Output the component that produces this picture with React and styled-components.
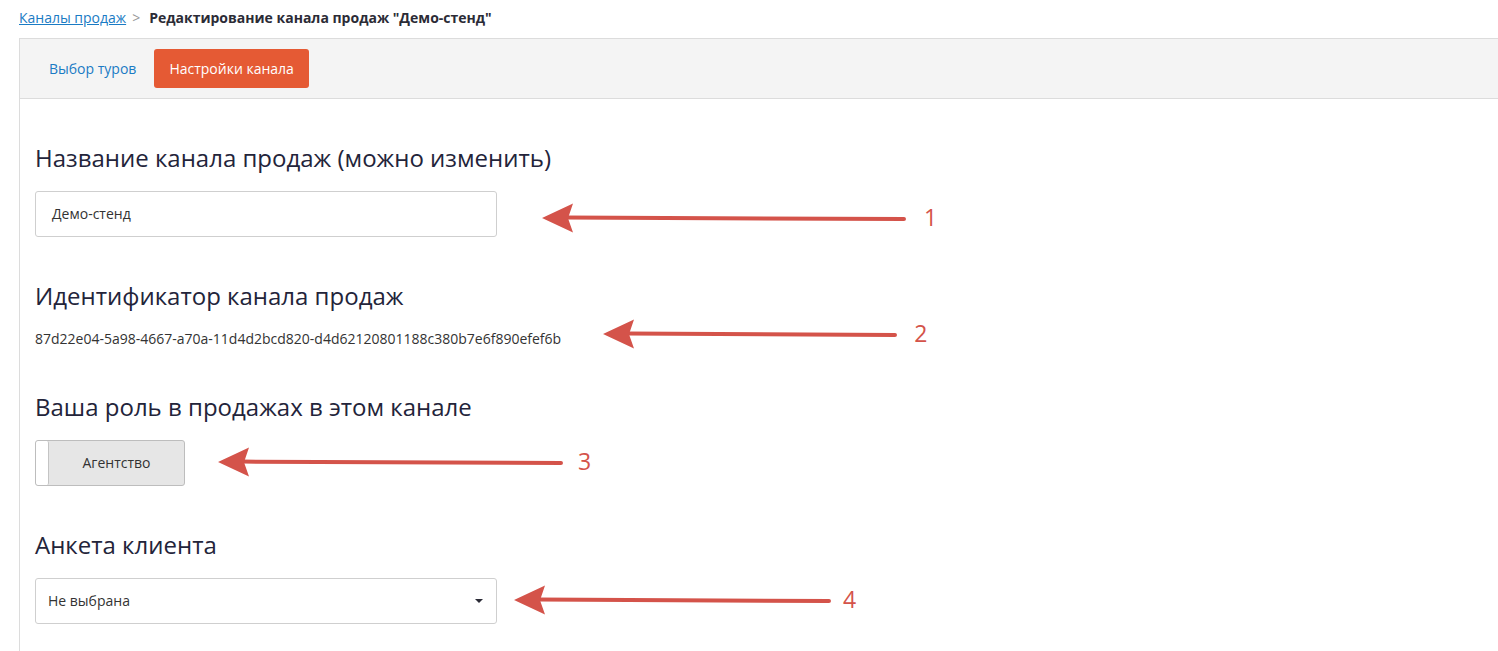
import styled, { createGlobalStyle } from 'styled-components';

const GlobalStyle = createGlobalStyle`
    html, body {
        margin: 0;
        padding: 0;
        background: #fff;
        overflow: hidden;
    }
    body {
        font-family: 'Open Sans', 'Noto Sans', sans-serif;
        font-size: 14px;
        color: #333;
    }
`;

const Page = styled.div`
    padding: 9px 0 0 19px;
`;

const Breadcrumbs = styled.div`
    display: flex;
    align-items: center;
    height: 18px;
    line-height: 18px;
    margin-bottom: 11px;
    font-size: 14px;
`;

const CrumbLink = styled.a`
    color: #1a7bc4;
    text-decoration: underline;
    cursor: pointer;
`;

const CrumbSep = styled.span`
    color: #999;
    margin: 0 9px 0 6px;
`;

const CrumbCurrent = styled.span`
    font-weight: 700;
    color: #2b2b36;
`;

const Panel = styled.div`
    border: 1px solid #dcdcdc;
    border-right: none;
    margin-right: -20px;
    min-height: 640px;
`;

const TabBar = styled.div`
    display: flex;
    align-items: center;
    gap: 3px;
    height: 60px;
    padding: 10px 14px 11px;
    box-sizing: border-box;
    background: #f4f4f4;
    border-bottom: 1px solid #dcdcdc;
`;

const Tab = styled.div`
    display: flex;
    align-items: center;
    height: 39px;
    padding: 0 15px;
    border-radius: 3px;
    font-size: 14px;
    cursor: pointer;
    color: ${(p) => (p.active ? '#fff' : '#1a7bc4')};
    background: ${(p) => (p.active ? '#e55a34' : 'transparent')};
`;

const Content = styled.div`
    padding: 46px 15px 0;
`;

const Section = styled.section`
    margin-bottom: 46px;
`;

const Heading = styled.h2`
    margin: 0 0 20px;
    font-size: 24px;
    line-height: 26px;
    font-weight: 400;
    color: #23243a;
`;

const Row = styled.div`
    display: flex;
    align-items: center;
    height: ${(p) => p.height || 46}px;
`;

const Field = styled.div`
    display: flex;
    align-items: center;
    justify-content: space-between;
    width: 462px;
    height: 46px;
    box-sizing: border-box;
    padding: 0 ${(p) => (p.select ? 13 : 16)}px 1px ${(p) => (p.select ? 12 : 16)}px;
    border: 1px solid #cfcfcf;
    border-radius: 3px;
    background: #fff;
    font-size: 14px;
    color: #333;
`;

const Caret = styled.span`
    width: 0;
    height: 0;
    border-left: 4px solid transparent;
    border-right: 4px solid transparent;
    border-top: 4px solid #2b2b36;
`;

const IdText = styled.div`
    font-size: 14px;
    line-height: 18px;
    color: #333;
`;

const Toggle = styled.div`
    display: flex;
    width: 150px;
    height: 46px;
    box-sizing: border-box;
    border: 1px solid #bdbdbd;
    border-radius: 3px;
    background: #e6e6e6;
    overflow: hidden;
`;

const ToggleHandle = styled.div`
    width: 12px;
    background: #fff;
    border-right: 1px solid #c4c4c4;
    border-radius: 2px;
`;

const ToggleLabel = styled.div`
    flex: 1;
    display: flex;
    align-items: center;
    justify-content: center;
    padding-bottom: 1px;
    font-size: 14px;
    color: #333;
`;

const Note = styled.div`
    display: flex;
    align-items: center;
    margin-left: ${(p) => p.offset}px;
    margin-top: ${(p) => Math.max(p.shift, 0) * 2}px;
    margin-bottom: ${(p) => Math.max(-p.shift, 0) * 2}px;
    color: #d4534a;
`;

const NoteNumber = styled.span`
    margin-left: ${(p) => p.gap || 14}px;
    margin-top: -2px;
    font-size: 23px;
    line-height: 30px;
    color: #d4534a;
`;

const Arrow = ({ width }) => (
    <svg width={width} height="30" viewBox={`0 0 ${width} 30`}>
        <line
            x1="24"
            y1="14.6"
            x2={width - 2}
            y2="16"
            stroke="#d4534a"
            strokeWidth="4"
            strokeLinecap="round"
        />
        <polygon points="0,15 31,0.5 26,15.2 31,29.5" fill="#d4534a" />
    </svg>
);

const Annotation = ({ offset, width, num, gap, shift = 0 }) => (
    <Note offset={offset} shift={shift}>
        <Arrow width={width} />
        <NoteNumber gap={gap}>{num}</NoteNumber>
    </Note>
);

export default function App() {
    return (
        <>
            <GlobalStyle />
            <Page>
                <Breadcrumbs>
                    <CrumbLink>Каналы продаж</CrumbLink>
                    <CrumbSep>&gt;</CrumbSep>
                    <CrumbCurrent>Редактирование канала продаж "Демо-стенд"</CrumbCurrent>
                </Breadcrumbs>
                <Panel>
                    <TabBar>
                        <Tab>Выбор туров</Tab>
                        <Tab active>Настройки канала</Tab>
                    </TabBar>
                    <Content>
                        <Section>
                            <Heading>Название канала продаж (можно изменить)</Heading>
                            <Row>
                                <Field>Демо-стенд</Field>
                                <Annotation offset={45} width={364} num="1" gap={18} shift={4} />
                            </Row>
                        </Section>
                        <Section>
                            <Heading>Идентификатор канала продаж</Heading>
                            <Row height={19}>
                                <IdText>87d22e04-5a98-4667-a70a-11d4d2bcd820-d4d62120801188c380b7e6f890efef6b</IdText>
                                <Annotation offset={42} width={294} num="2" gap={17} shift={-5} />
                            </Row>
                        </Section>
                        <Section>
                            <Heading>Ваша роль в продажах в этом канале</Heading>
                            <Row>
                                <Toggle>
                                    <ToggleHandle />
                                    <ToggleLabel>Агентство</ToggleLabel>
                                </Toggle>
                                <Annotation offset={33} width={345} num="3" gap={15} shift={-1} />
                            </Row>
                        </Section>
                        <Section>
                            <Heading>Анкета клиента</Heading>
                            <Row>
                                <Field select>
                                    Не выбрана
                                    <Caret />
                                </Field>
                                <Annotation offset={17} width={317} num="4" gap={12} shift={-1} />
                            </Row>
                        </Section>
                    </Content>
                </Panel>
            </Page>
        </>
    );
}
